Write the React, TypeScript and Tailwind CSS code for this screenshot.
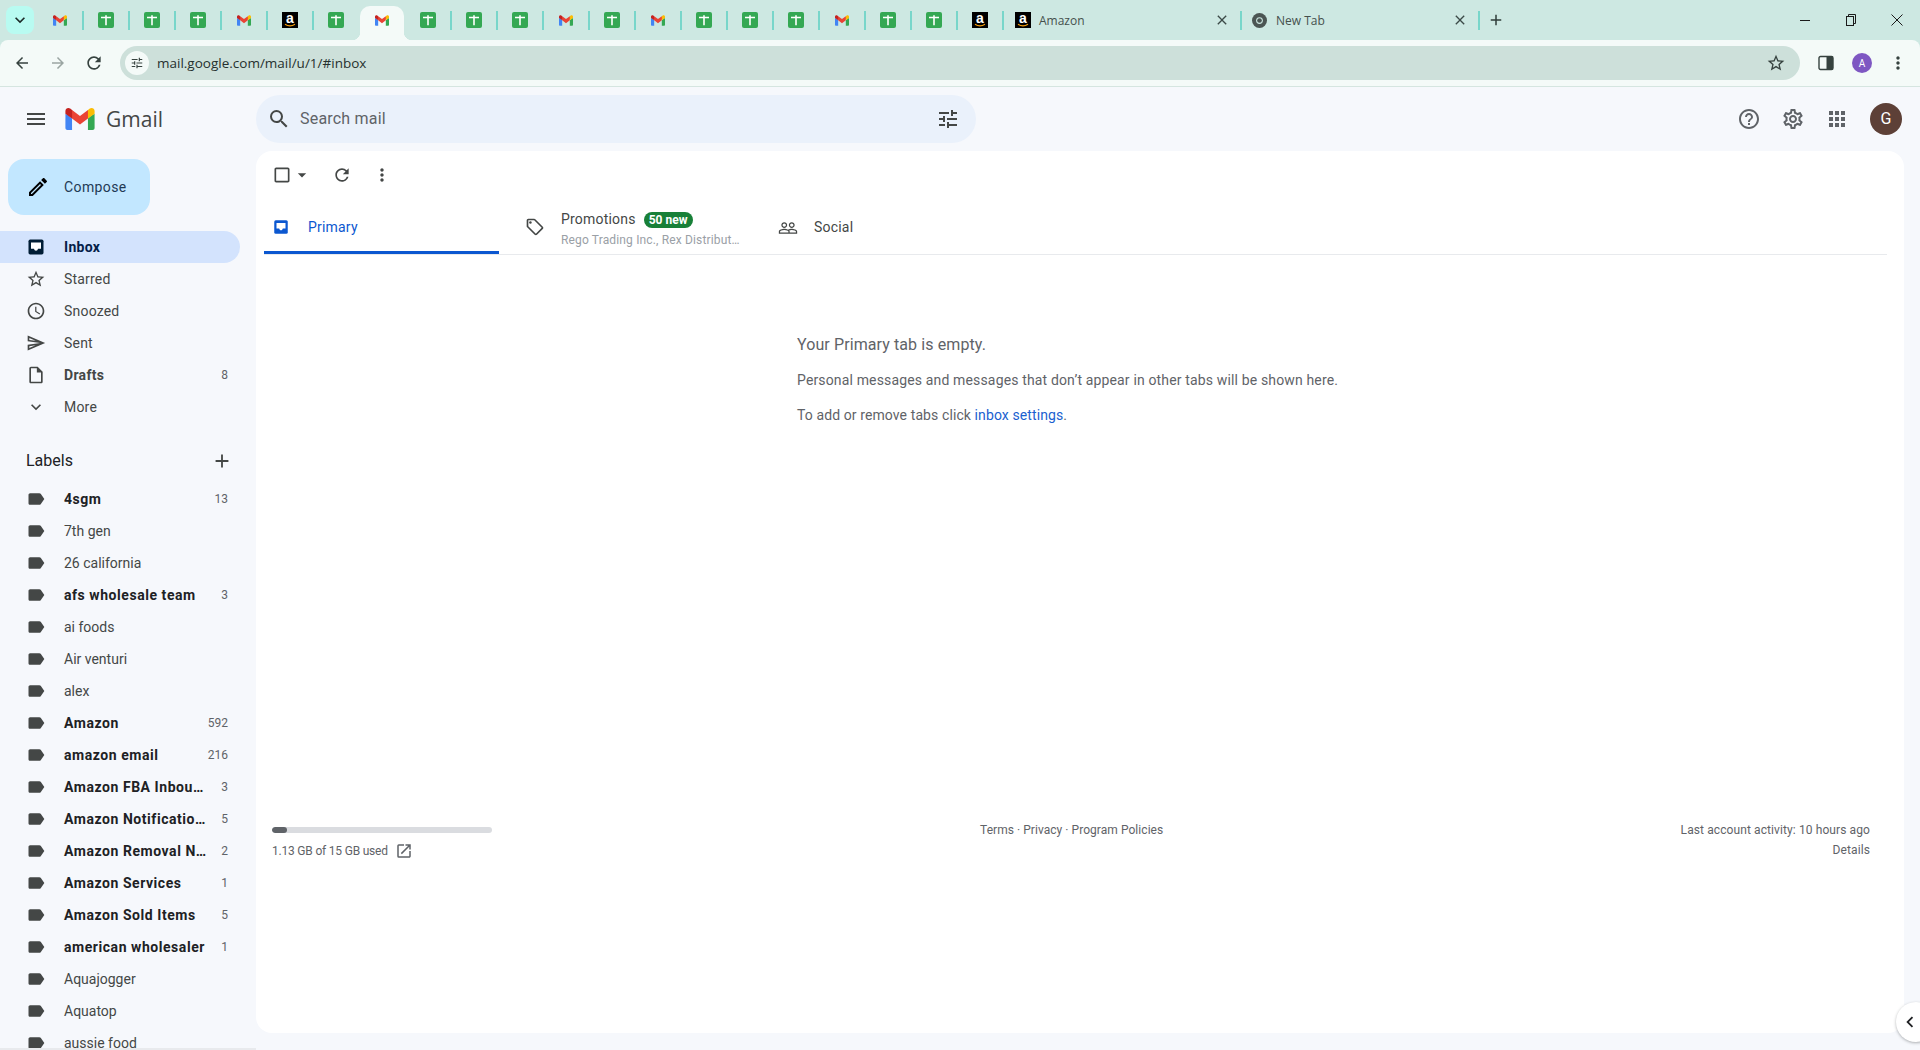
import {
  MdAccessTime, MdAdd, MdApps, MdArrowBack, MdArrowDropDown, MdArrowForward, MdCheckBoxOutlineBlank,
  MdChevronLeft, MdClose, MdExpandMore, MdHelpOutline, MdLabel, MdMenu, MdMoreVert, MdOpenInNew,
  MdOutlineEdit, MdOutlineInsertDriveFile, MdOutlineLocalOffer, MdOutlineSend, MdOutlineSettings, MdOutlineStarBorder,
  MdPeopleOutline, MdRefresh, MdSearch, MdStarBorder, MdTune, MdKeyboardArrowDown,
} from "react-icons/md";

const GmailLogo = ({ className }: { className: string }) => (
  <svg viewBox="0 0 256 193" className={className}>
    <path fill="#4285F4" d="M58.182 192.05V93.14L27.507 65.077 0 49.504v125.091c0 9.658 7.825 17.455 17.455 17.455h40.727Z" />
    <path fill="#34A853" d="M197.818 192.05h40.727c9.659 0 17.455-7.826 17.455-17.455V49.505l-31.156 17.837-27.026 25.798v98.91Z" />
    <path fill="#EA4335" d="m58.182 93.14-4.174-38.647 4.174-36.989L128 69.868l69.818-52.364 4.669 34.992-4.669 40.644L128 145.504z" />
    <path fill="#FBBC04" d="M197.818 17.504V93.14L256 49.504V26.231c0-21.585-24.64-33.89-41.89-20.945l-16.292 12.218Z" />
    <path fill="#C5221F" d="m0 49.504 26.759 20.07L58.182 93.14V17.504L41.89 5.286C24.61-7.66 0 4.646 0 26.23v23.273Z" />
  </svg>
);

const SheetIcon = () => (
  <svg viewBox="0 0 16 16" className="h-4 w-4">
    <rect width="16" height="16" rx="2" fill="#34a853" />
    <path d="M3 5.5h10M8 3.2v10" stroke="#fff" strokeWidth="1.6" />
  </svg>
);

const AmazonIcon = () => (
  <div className="relative flex h-4 w-4 justify-center bg-black">
    <span className="text-[14px] leading-[12px] font-bold text-white font-['Liberation_Sans',sans-serif]">a</span>
    <svg viewBox="0 0 16 16" className="absolute inset-0 h-4 w-4">
      <path d="M3 12.3c3 2 7 2 10 0" stroke="#f59e0b" strokeWidth="1.2" fill="none" />
    </svg>
  </div>
);

const ChromeIcon = () => (
  <svg viewBox="0 0 16 16" className="h-[15px] w-[15px]">
    <circle cx="8" cy="8" r="8" fill="#4b5553" />
    <circle cx="8" cy="8" r="3.6" fill="#cde8e2" />
    <circle cx="8" cy="8" r="2.5" fill="#4b5553" />
  </svg>
);

// inbox tray with a white well, the one Gmail uses for the selected item
const InboxFilled = ({ className }: { className: string }) => (
  <svg viewBox="0 0 24 24" className={className}>
    <path fill="currentColor" d="M5 3h14a2 2 0 0 1 2 2v14a2 2 0 0 1-2 2H5a2 2 0 0 1-2-2V5a2 2 0 0 1 2-2z" />
    <path fill="#fff" d="M6 6.5h12V14h-3.6c-.3 1.4-1.2 2.4-2.4 2.4S9.9 15.4 9.6 14H6z" />
  </svg>
);

type Fav = "g" | "s" | "a";

const pinnedLeft: Fav[] = ["g", "s", "s", "s", "g", "a", "s"];
const pinnedRight: Fav[] = ["s", "s", "s", "g", "s", "g", "s", "s", "s", "g", "s", "s", "a"];

const Favicon = ({ kind }: { kind: Fav }) => {
  if (kind === "g") return <GmailLogo className="h-[11px] w-[14px]" />;
  if (kind === "s") return <SheetIcon />;
  return <AmazonIcon />;
};

const Separator = ({ hidden }: { hidden?: boolean }) => (
  <span className={hidden ? "h-[19px] w-[2px]" : "h-[19px] w-[2px] bg-[#78d6ca]"} />
);

const MiniTab = ({ kind, noSep }: { kind: Fav; noSep?: boolean }) => (
  <>
    <div className="flex h-full w-[44px] items-center justify-center">
      <Favicon kind={kind} />
    </div>
    <Separator hidden={noSep} />
  </>
);

const TabStrip = () => (
  <div className="flex h-10 items-stretch pl-[6px] text-[12px] text-[#45504d] font-['Open_Sans',sans-serif]">
    <div className="mt-[6px] mr-1 flex h-7 w-7 items-center justify-center rounded-lg bg-[#b8fbf1]">
      <MdKeyboardArrowDown className="text-[20px] text-[#1d2b28]" />
    </div>
    <div className="flex h-10 items-center">
      {pinnedLeft.map((k, i) => (
        <MiniTab key={i} kind={k} noSep={i === pinnedLeft.length - 1} />
      ))}
      <div className="relative mt-[6px] flex h-[34px] w-[44px] items-center justify-center rounded-t-[10px] bg-[#f4faf8] pb-[6px]">
        <GmailLogo className="h-[11px] w-[14px]" />
        <span className="absolute bottom-0 -left-2 h-2 w-2 bg-[radial-gradient(circle_at_0_0,#cde8e2_8px,#f4faf8_8.5px)]" />
        <span className="absolute bottom-0 -right-2 h-2 w-2 bg-[radial-gradient(circle_at_100%_0,#cde8e2_8px,#f4faf8_8.5px)]" />
      </div>
      <Separator hidden />
      {pinnedRight.map((k, i) => (
        <MiniTab key={i} kind={k} />
      ))}
      <div className="flex h-full w-[236px] items-center pl-[11px] pr-[10px]">
        <AmazonIcon />
        <span className="ml-2 flex-1 pt-px">Amazon</span>
        <MdClose className="text-[16px] text-[#3c4a47]" />
      </div>
      <Separator />
      <div className="flex h-full w-[236px] items-center pl-[10px] pr-[10px]">
        <ChromeIcon />
        <span className="ml-[9px] flex-1 pt-px">New Tab</span>
        <MdClose className="text-[16px] text-[#3c4a47]" />
      </div>
      <Separator />
      <MdAdd className="ml-[7px] text-[18px] text-[#2f3d3a]" />
    </div>
    <div className="ml-auto flex h-10 items-center text-[#1b1b1b]">
      <div className="flex w-[46px] justify-center">
        <span className="h-px w-[10px] bg-[#1b1b1b]" />
      </div>
      <div className="flex w-[46px] justify-center">
        <svg viewBox="0 0 10 12" className="h-3 w-[10px]" fill="none" stroke="#1b1b1b">
          <rect x="0.5" y="2.5" width="7" height="9" />
          <path d="M2.5 2.5v-2h7v9h-2" />
        </svg>
      </div>
      <div className="flex w-[46px] justify-center">
        <svg viewBox="0 0 12 12" className="h-3 w-3" stroke="#1b1b1b">
          <path d="M0.5 0.5l11 11M11.5 0.5l-11 11" />
        </svg>
      </div>
    </div>
  </div>
);

const AddressBar = () => (
  <div className="flex h-[47px] items-center rounded-t-lg border-b border-[#d5e5e0] bg-[#f4faf8]">
    <MdArrowBack className="ml-[13px] text-[18px] text-[#36423f]" />
    <MdArrowForward className="ml-[18px] text-[18px] text-[#9aa5a2]" />
    <MdRefresh className="ml-[17px] text-[20px] text-[#36423f]" />
    <div className="ml-4 flex h-[34px] w-[1680px] items-center rounded-full bg-[#cde0da] pl-[5px] pr-[14px]">
      <div className="flex h-6 w-6 items-center justify-center rounded-full bg-[#f4faf8]">
        <MdTune className="text-[14px] text-[#36423f]" />
      </div>
      <span className="ml-2 flex-1 text-[13.5px] text-[#26302e] font-['Open_Sans',sans-serif]">mail.google.com/mail/u/1/#inbox</span>
      <MdStarBorder className="text-[20px] text-[#36423f]" />
    </div>
    <svg viewBox="0 0 16 16" className="ml-[18px] h-4 w-4">
      <rect x="1" y="1.5" width="14" height="13" rx="1.5" fill="#f4faf8" stroke="#36423f" strokeWidth="1.4" />
      <rect x="8.5" y="1.5" width="6.5" height="13" fill="#36423f" />
    </svg>
    <div className="ml-[18px] flex h-5 w-5 items-center justify-center rounded-full bg-[#7e57c2] text-[10px] text-white">A</div>
    <MdMoreVert className="ml-[16px] text-[20px] text-[#36423f]" />
  </div>
);

type NavItem = { name: string; Icon: React.ComponentType<{ className: string }>; count?: string; bold?: boolean; active?: boolean };

const navItems: NavItem[] = [
  { name: "Inbox", Icon: InboxFilled, bold: true, active: true },
  { name: "Starred", Icon: MdOutlineStarBorder },
  { name: "Snoozed", Icon: MdAccessTime },
  { name: "Sent", Icon: MdOutlineSend },
  { name: "Drafts", Icon: MdOutlineInsertDriveFile, count: "8", bold: true },
  { name: "More", Icon: MdExpandMore },
];

const labels: { name: string; count?: string }[] = [
  { name: "4sgm", count: "13" },
  { name: "7th gen" },
  { name: "26 california" },
  { name: "afs wholesale team", count: "3" },
  { name: "ai foods" },
  { name: "Air venturi" },
  { name: "alex" },
  { name: "Amazon", count: "592" },
  { name: "amazon email", count: "216" },
  { name: "Amazon FBA Inbou…", count: "3" },
  { name: "Amazon Notificatio…", count: "5" },
  { name: "Amazon Removal N…", count: "2" },
  { name: "Amazon Services", count: "1" },
  { name: "Amazon Sold Items", count: "5" },
  { name: "american wholesaler", count: "1" },
  { name: "Aquajogger" },
  { name: "Aquatop" },
  { name: "aussie food" },
];

const NavRow = ({ item }: { item: NavItem }) => {
  const { Icon } = item;
  return (
    <div
      className={
        item.active
          ? "flex h-8 w-[240px] shrink-0 items-center rounded-r-2xl bg-[#d3e3fd] pl-[26px] pr-3 text-[#041e49]"
          : "flex h-8 w-[240px] shrink-0 items-center pl-[26px] pr-3 text-[#444746]"
      }
    >
      <Icon className={item.active ? "h-5 w-5 shrink-0 text-[#001d35]" : "h-5 w-5 shrink-0 text-[#444746]"} />
      <span className={item.bold ? "ml-[18px] flex-1 truncate text-[14px] font-bold tracking-[0.3px]" : "ml-[18px] flex-1 truncate text-[14px] tracking-[0.2px]"}>
        {item.name}
      </span>
      {item.count && <span className="text-[12px] text-[#5f6368]">{item.count}</span>}
    </div>
  );
};

const LabelRow = ({ name, count }: { name: string; count?: string }) => (
  <div className="flex h-8 w-[240px] shrink-0 items-center pl-[26px] pr-3 text-[#444746]">
    <MdLabel className="h-5 w-5 shrink-0 text-[#444746]" />
    <span className={count ? "ml-[18px] min-w-0 flex-1 whitespace-nowrap text-[14px] font-bold tracking-[0.55px] text-[#202124]" : "ml-[18px] min-w-0 flex-1 whitespace-nowrap text-[14px]"}>
      {name}
    </span>
    {count && <span className="text-[12px] text-[#5f6368]">{count}</span>}
  </div>
);

const Sidebar = () => (
  <div className="flex h-full w-[256px] shrink-0 flex-col overflow-hidden">
    <div className="flex h-16 shrink-0 items-center pl-6">
      <MdMenu className="text-[24px] text-[#444746]" />
      <GmailLogo className="ml-[17px] h-[22px] w-[30px]" />
      <span className="ml-[11px] pt-px text-[21px] text-[#444746] font-['Open_Sans',sans-serif]">Gmail</span>
    </div>
    <div className="mt-2 ml-2 flex h-14 w-[142px] shrink-0 items-center rounded-2xl bg-[#c2e7ff] pl-[18px] text-[#1f3a55]">
      <MdOutlineEdit className="text-[24px] text-black" />
      <span className="ml-[14px] text-[14px] tracking-[0.4px]">Compose</span>
    </div>
    <div className="mt-4 flex flex-col">
      {navItems.map((item) => (
        <NavRow key={item.name} item={item} />
      ))}
    </div>
    <div className="mt-[22px] flex h-8 w-[240px] shrink-0 items-center justify-between pl-[26px] pr-[7px] text-[16px] text-[#202124]">
      <span>Labels</span>
      <MdAdd className="text-[22px] text-[#444746]" />
    </div>
    <div className="mt-[6px] flex flex-col">
      {labels.map((l) => (
        <LabelRow key={l.name} name={l.name} count={l.count} />
      ))}
    </div>
  </div>
);

const TopBar = () => (
  <div className="flex h-16 shrink-0 items-center">
    <div className="flex h-12 w-[720px] items-center rounded-full bg-[#eaf1fb] pl-[11px] pr-[16px]">
      <MdSearch className="text-[24px] text-[#444746]" />
      <span className="ml-[9px] flex-1 text-[16px] tracking-[0.2px] text-[#5f6368]">Search mail</span>
      <MdTune className="text-[24px] text-[#444746]" />
    </div>
    <div className="ml-auto flex items-center pr-[18px]">
      <MdHelpOutline className="text-[24px] text-[#5f6368]" />
      <MdOutlineSettings className="ml-5 text-[24px] text-[#5f6368]" />
      <MdApps className="ml-5 text-[24px] text-[#5f6368]" />
      <div className="ml-[21px] flex h-8 w-8 items-center justify-center rounded-full bg-[#5d4037] text-[16px] text-white">G</div>
    </div>
  </div>
);

const CategoryTabs = () => (
  <div className="mx-2 mr-[17px] flex h-14 shrink-0 border-b border-[#e8eaed]">
    <div className="flex w-[235px] items-center border-b-[3px] border-[#0b57d0] pl-2 pt-1 text-[#0b57d0]">
      <InboxFilled className="h-[18px] w-[18px]" />
      <span className="ml-[18px] text-[14px] tracking-[0.2px]">Primary</span>
    </div>
    <div className="flex w-[265px] items-center pl-[26px]">
      <MdOutlineLocalOffer className="h-5 w-5 text-[#444746]" />
      <div className="ml-4 pt-[7px]">
        <div className="flex h-4 items-center">
          <span className="text-[14px] tracking-[0.2px] text-[#444746]">Promotions</span>
          <span className="ml-2 flex h-4 w-[49px] items-center justify-center rounded-full bg-[#188038] text-[12px] font-bold text-white">50 new</span>
        </div>
        <div className="mt-[3px] whitespace-nowrap text-[12px] tracking-[0.15px] text-[#9aa0a6]">Rego Trading Inc., Rex Distribut…</div>
      </div>
    </div>
    <div className="flex items-center pl-[14px] pt-[2px]">
      <MdPeopleOutline className="h-5 w-5 text-[#444746]" />
      <span className="ml-4 text-[14px] tracking-[0.2px] text-[#444746]">Social</span>
    </div>
  </div>
);

const Panel = () => (
  <div className="flex h-[882px] w-[1648px] shrink-0 flex-col rounded-2xl bg-white text-[#5f6368]">
    <div className="flex h-12 shrink-0 items-center pl-[16px]">
      <MdCheckBoxOutlineBlank className="h-[20px] w-[20px] text-[#444746]" />
      <MdArrowDropDown className="h-5 w-5 text-[#444746]" />
      <MdRefresh className="ml-5 h-[20px] w-[20px] text-[#444746]" />
      <MdMoreVert className="ml-5 h-[20px] w-[20px] text-[#444746]" />
    </div>
    <CategoryTabs />
    <div className="h-[565px] shrink-0 pl-[541px]">
      <div className="mt-20 text-[16px] leading-5 tracking-[0.1px]">Your Primary tab is empty.</div>
      <div className="mt-[15px] text-[14px] leading-5 tracking-[0.15px]">Personal messages and messages that don’t appear in other tabs will be shown here.</div>
      <div className="mt-[15px] text-[14px] leading-5 tracking-[0.1px]">
        To add or remove tabs click <span className="text-[#1a5fd0]">inbox settings</span>.
      </div>
    </div>
    <div className="flex text-[12px] text-[#5f6368]">
      <div className="ml-4 w-[708px] shrink-0 pt-[7px]">
        <div className="h-[6px] w-[220px] overflow-hidden rounded-full bg-[#dadce0]">
          <div className="h-full w-[15px] rounded-full bg-[#5f6368]" />
        </div>
        <div className="mt-[9px] flex items-center tracking-[-0.2px]">
          <span>1.13 GB of 15 GB used</span>
          <MdOpenInNew className="ml-[7px] h-[18px] w-[18px]" />
        </div>
      </div>
      <div className="pt-px tracking-[0.05px]">Terms · Privacy · Program Policies</div>
      <div className="flex-1 pr-[34px] text-right leading-5 tracking-[0.1px]">
        <div>Last account activity: 10 hours ago</div>
        <div>Details</div>
      </div>
    </div>
  </div>
);

export default function App() {
  return (
    <div className="relative flex h-[1050px] w-[1920px] flex-col overflow-hidden bg-[#f6f8fc] font-['Roboto',sans-serif]">
      <div className="shrink-0 bg-[#cde8e2]">
        <TabStrip />
        <AddressBar />
      </div>
      <div className="flex min-h-0 flex-1">
        <Sidebar />
        <div className="flex min-w-0 flex-1 flex-col">
          <TopBar />
          <Panel />
        </div>
      </div>
      <div className="absolute bottom-0 left-0 h-[2px] w-[256px] bg-[#e8eaed]" />
      <div className="absolute right-[-16px] bottom-[8px] flex h-10 w-10 items-center rounded-full bg-white pl-[3px] shadow-[0_1px_3px_rgba(60,64,67,0.4)]">
        <MdChevronLeft className="text-[22px] text-[#202124]" />
      </div>
    </div>
  );
}
